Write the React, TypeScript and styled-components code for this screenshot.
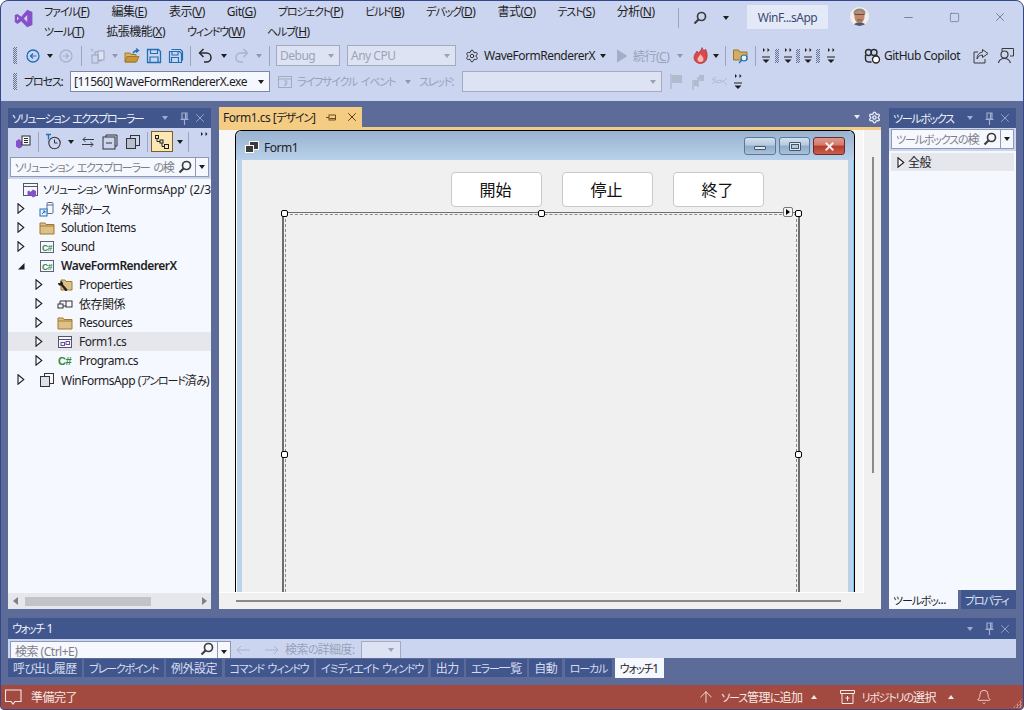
import { ReactNode } from "react";
import styled, { createGlobalStyle } from "styled-components";
import { ArrowUp, Bell, Minus, Settings, Square, X } from "lucide-react";

const GlobalStyle = createGlobalStyle`
  html, body {
    margin: 0;
    width: 1024px;
    height: 710px;
    overflow: hidden;
    background: #fff;
  }
  * {
    box-sizing: border-box;
  }
  body {
    font-family: "Noto Sans", "Noto Sans CJK JP", sans-serif;
    font-size: 12px;
    letter-spacing: -0.5px;
    font-feature-settings: "palt";
    color: #1e1e1e;
  }
`;

// katakana in the original UI font runs much narrower than the CJK fallback
const Ka = styled.span`
  font-size: 11px;
  letter-spacing: -1.15px;
  word-spacing: 2px;
`;

const T = ({ children }: { children: string }) => (
  <>
    {children
      .split(/([\u3041-\u30ff]+(?: [\u3041-\u30ff]+)*)/)
      .map((part, i) => (i % 2 ? <Ka key={i}>{part}</Ka> : part))}
  </>
);

const Window = styled.div`
  width: 1024px;
  height: 710px;
  display: flex;
  flex-direction: column;
  border: 1px solid #33478a;
  border-radius: 8px 8px 4px 4px;
  overflow: hidden;
  background: #5d6b99;
`;

const TitleArea = styled.div`
  height: 100px;
  flex: none;
  background: #ccd5f0;
`;

const TitleBar = styled.div`
  height: 43px;
  display: flex;
  align-items: flex-start;
`;

const LogoBox = styled.div`
  width: 43px;
  flex: none;
  padding: 8px 0 0 13px;
`;

const MenuColumn = styled.div`
  width: 634px;
  flex: none;
  display: flex;
  flex-direction: column;
  padding-top: 1px;
`;

const MenuRow = styled.div`
  height: 20px;
  display: flex;
  align-items: center;
  gap: 22px;
  white-space: nowrap;
  line-height: 20px;
`;

const MenuItem = styled.span`
  color: #1e1e1e;
`;

const TitleSep = styled.div`
  width: 1px;
  height: 20px;
  margin-top: 7px;
  background: #9aa5c0;
  flex: none;
`;

const TitleBox = styled.div`
  width: 81px;
  height: 24px;
  margin: 4px 0 0 16px;
  background: #e4e9f8;
  color: #3c4a70;
  display: flex;
  align-items: center;
  justify-content: center;
  flex: none;
`;

const Avatar = styled.div`
  width: 19px;
  height: 19px;
  margin: 6px 0 0 22px;
  border-radius: 50%;
  overflow: hidden;
  flex: none;
`;

const WinControl = styled.div`
  width: 46px;
  height: 32px;
  flex: none;
  display: flex;
  align-items: center;
  justify-content: center;
  color: #4d5c82;
`;

const WinControls = styled.div`
  display: flex;
  margin-left: 16px;
`;

const Toolbar = styled.div`
  height: 23px;
  margin-bottom: 3px;
  display: flex;
  align-items: center;
  padding: 0 9px 0 12px;
  white-space: nowrap;
`;

const Grip = styled.div`
  width: 4px;
  height: 17px;
  flex: none;
  background: repeating-conic-gradient(#66718f 0 25%, transparent 0 50%) 0 0 / 2px 2px;
`;

const SmallGrip = styled(Grip)`
  height: 14px;
`;

const Slot = styled.div<{ $w: number; $h?: number }>`
  width: ${(p) => p.$w}px;
  height: ${(p) => (p.$h ? `${p.$h}px` : "100%")};
  flex: none;
  display: flex;
  align-items: center;
  justify-content: center;
`;

const TopSlot = styled(Slot)`
  align-items: flex-start;
  padding-top: 3px;
`;

const Gap = styled.div<{ $w: number }>`
  width: ${(p) => p.$w}px;
  flex: none;
`;

const ToolSep = styled.div`
  width: 1px;
  height: 20px;
  background: #9aa5c0;
`;

const Caret = styled.span<{ $color?: string; $up?: boolean; $ml?: number }>`
  display: block;
  width: 0;
  height: 0;
  flex: none;
  margin-left: ${(p) => p.$ml ?? 0}px;
  border-left: 3.5px solid transparent;
  border-right: 3.5px solid transparent;
  ${(p) => (p.$up ? "border-bottom" : "border-top")}: 4px solid ${(p) => p.$color ?? "#1e1e1e"};
`;

const Combo = styled.div<{ $w: number; $off?: boolean }>`
  width: ${(p) => p.$w}px;
  height: 21px;
  flex: none;
  display: flex;
  align-items: center;
  justify-content: space-between;
  padding: 0 5px 0 3px;
  border: 1px solid ${(p) => (p.$off ? "#a3abbd" : "#7d88a6")};
  background: ${(p) => (p.$off ? "#dde3f3" : "#f6f8ff")};
  color: ${(p) => (p.$off ? "#9aa3b8" : "#1e1e1e")};
  overflow: hidden;
`;

const ToolText = styled.span<{ $w?: number; $off?: boolean }>`
  color: ${(p) => (p.$off ? "#98a1b8" : "#1e1e1e")};
  flex: none;
  ${(p) => (p.$w ? `width: ${p.$w}px;` : "")}
`;

const RightTools = styled.div`
  margin-left: auto;
  display: flex;
  align-items: center;
  height: 100%;
`;

const Main = styled.div`
  flex: 1;
  min-height: 0;
  padding: 7px 7px 0;
  display: flex;
  flex-direction: column;
  gap: 9px;
`;

const TopRow = styled.div`
  height: 501px;
  flex: none;
  display: flex;
  gap: 8px;
`;

const Panel = styled.div<{ $w: number }>`
  width: ${(p) => p.$w}px;
  flex: none;
  display: flex;
  flex-direction: column;
  background: #f6f8ff;
  overflow: hidden;
`;

const PanelHeader = styled.div<{ $h?: number }>`
  height: ${(p) => p.$h ?? 20}px;
  flex: none;
  background: #40568d;
  color: #f2f4fb;
  display: flex;
  align-items: center;
  padding: 0 4px 0 4px;
  white-space: nowrap;
`;

const HeaderTitle = styled.span`
  flex: 1;
  & > span {
    letter-spacing: -1.35px;
  }
`;

const HeaderButtons = styled.div`
  display: flex;
  align-items: center;
  gap: 3px;
  color: #9fadcf;
`;

const PanelTools = styled.div`
  height: 27px;
  flex: none;
  background: #ccd5f0;
  display: flex;
  align-items: center;
  padding-left: 3px;
`;

const ToggleBox = styled.div`
  width: 22px;
  height: 21px;
  flex: none;
  margin-left: 2px;
  background: #fbe7b5;
  border: 1px solid #7d6020;
  display: flex;
  align-items: center;
  justify-content: center;
`;

const SearchRow = styled.div<{ $pt: number; $h: number }>`
  height: ${(p) => p.$h}px;
  flex: none;
  background: #ccd5f0;
  padding: ${(p) => p.$pt}px 2px 0;
`;

const SearchBox = styled.div<{ $h: number }>`
  height: ${(p) => p.$h}px;
  display: flex;
  align-items: center;
  border: 1px solid #8f99b3;
  background: #f6f8ff;
`;

const SearchText = styled.span`
  flex: 1;
  min-width: 0;
  overflow: hidden;
  white-space: nowrap;
  padding-left: 4px;
  color: #7e7e86;
`;

const SearchIcon = styled.div`
  width: 20px;
  flex: none;
  display: flex;
  justify-content: center;
  color: #4b4b4b;
`;

const SearchDrop = styled.div`
  width: 13px;
  height: 100%;
  flex: none;
  border-left: 1px solid #8f99b3;
  display: flex;
  align-items: center;
  justify-content: center;
`;

const TreeList = styled.div`
  flex: 1;
  min-height: 0;
  padding-top: 1px;
  overflow: hidden;
`;

const TreeRow = styled.div<{ $depth: number; $selected?: boolean }>`
  height: 19px;
  display: flex;
  align-items: center;
  white-space: nowrap;
  padding-left: ${(p) => 8 + p.$depth * 18}px;
  background: ${(p) => (p.$selected ? "#e6e7ed" : "transparent")};
`;

const TreeArrow = styled.div`
  width: 10px;
  flex: none;
  display: flex;
  justify-content: center;
`;

const TreeIcon = styled.div`
  width: 16px;
  height: 16px;
  flex: none;
  margin: 0 6px 0 13px;
`;

const RootIcon = styled(TreeIcon)`
  margin: 0 4px 0 7px;
`;

const TreeLabel = styled.span<{ $bold?: boolean }>`
  font-weight: ${(p) => (p.$bold ? 600 : 400)};
`;

const RootLabel = styled(TreeLabel)`
  letter-spacing: -0.15px;
`;

const HScroll = styled.div`
  height: 16px;
  flex: none;
  background: #e6e7ed;
  display: flex;
  align-items: center;
  padding: 0 4px 0 5px;
  justify-content: space-between;
`;

const HThumb = styled.div`
  width: 126px;
  height: 9px;
  background: #c2c3c9;
  margin: 0 auto 0 7px;
`;

const ScrollArrow = styled.span<{ $right?: boolean }>`
  display: block;
  width: 0;
  height: 0;
  border-top: 4px solid transparent;
  border-bottom: 4px solid transparent;
  ${(p) => (p.$right ? "border-left" : "border-right")}: 5px solid #7c8087;
`;

const DocColumn = styled.div`
  width: 662px;
  flex: none;
  display: flex;
  flex-direction: column;
  margin-top: -1px;
`;

const DocStrip = styled.div`
  height: 20px;
  flex: none;
  display: flex;
  align-items: center;
`;

const DocTab = styled.div`
  width: 143px;
  height: 100%;
  flex: none;
  background: #f5cc84;
  display: flex;
  align-items: center;
  padding: 0 3px 0 4px;
  white-space: nowrap;
  color: #1e1e1e;
`;

const DocTabTitle = styled.span`
  flex: 1;
`;

const DocTools = styled.div`
  margin-left: auto;
  display: flex;
  align-items: center;
  gap: 8px;
  color: #e6ebf7;
`;

const AccentLine = styled.div`
  height: 3px;
  flex: none;
  background: #f5cc84;
`;

const Designer = styled.div`
  flex: 1;
  min-height: 0;
  display: grid;
  grid-template-columns: 1fr 17px;
  grid-template-rows: 1fr 16px;
  background: #f0f0f0;
`;

const Canvas = styled.div`
  position: relative;
  overflow: hidden;
  background: #f7f7f7;
  border-right: 1px solid #fff;
  border-bottom: 1px solid #fff;
`;

const VBar = styled.div`
  padding: 27px 0 0 8px;
`;

const VThumb = styled.div`
  width: 2px;
  height: 316px;
  background: #8a8a8a;
`;

const HBar = styled.div`
  padding: 7px 0 0 17px;
`;

const HLine = styled.div`
  width: 605px;
  height: 2px;
  background: #8a8a8a;
`;

const FormWindow = styled.div`
  position: absolute;
  left: 16px;
  top: 0;
  width: 620px;
  height: 600px;
  border: 1px solid #000;
  border-bottom: none;
  border-radius: 6px 6px 0 0;
  box-shadow: inset 1px 1px 0 #fff, inset -1px 0 0 #7cc4ee;
  background: #bad3ea;
  display: flex;
  flex-direction: column;
  padding: 0 6px 0 6px;
`;

const FormTitleBar = styled.div`
  height: 29px;
  flex: none;
  margin: 0 -6px;
  padding: 3px 9px 0;
  background: linear-gradient(#98b2d0, #b9d1ea);
  border-radius: 6px 6px 0 0;
  display: flex;
  align-items: center;
  gap: 5px;
  color: #222;
`;

const FormButtons = styled.div`
  margin-left: auto;
  display: flex;
  align-items: flex-start;
  gap: 3px;
  height: 100%;
  padding-top: 3px;
`;

const FormBtn = styled.div<{ $w: number; $close?: boolean }>`
  width: ${(p) => p.$w}px;
  height: 18px;
  border-radius: 3px;
  border: 1px solid ${(p) => (p.$close ? "#6b2b2b" : "#5c7896")};
  background: ${(p) =>
    p.$close
      ? "linear-gradient(#dc9a8e 0, #d27a6a 45%, #b53a2a 50%, #c9604c 100%)"
      : "linear-gradient(#d3e1ef 0, #b4c9de 45%, #8fabc8 50%, #a9c2da 100%)"};
  display: flex;
  align-items: center;
  justify-content: center;
`;

const MinGlyph = styled.div`
  width: 12px;
  height: 4px;
  margin-top: 4px;
  background: #dfe7ef;
  border: 1px solid #43566c;
  border-radius: 1px;
`;

const MaxGlyph = styled.div`
  width: 12px;
  height: 9px;
  background: #dfe7ef;
  border: 1px solid #43566c;
  border-radius: 1px;
  display: flex;
  align-items: center;
  justify-content: center;
  &::after {
    content: "";
    width: 6px;
    height: 3px;
    background: #b4c9de;
    border: 1px solid #43566c;
  }
`;

const Client = styled.div`
  flex: 1;
  min-height: 0;
  background: #f0f0f0;
  padding-top: 12px;
`;

const ButtonRow = styled.div`
  display: flex;
  gap: 20px;
  margin-left: 209px;
`;

const FormButton = styled.div`
  width: 91px;
  height: 35px;
  padding: 0 2px 2px 0;
  background: #fff;
  border: 1px solid #c8c8c8;
  border-radius: 4px;
  display: flex;
  align-items: center;
  justify-content: center;
  font-size: 16px;
  letter-spacing: 0;
  color: #111;
`;

const Selection = styled.div`
  position: relative;
  width: 518px;
  height: 460px;
  margin: 5px 0 0 40px;
  border: 1px solid #6e6e6e;
  border-left-width: 2px;
  border-right-width: 2px;
  border-bottom: none;
  padding: 1px 1px 0;
`;

const InnerDash = styled.div`
  height: 100%;
  border: 1px dashed #8c8c8c;
  border-bottom: none;
`;

const Handle = styled.div<{ $x: string; $y: number }>`
  position: absolute;
  left: ${(p) => p.$x};
  top: ${(p) => p.$y}px;
  width: 7px;
  height: 7px;
  margin-left: -3.5px;
  background: #fff;
  border: 1.5px solid #000;
  border-radius: 2px;
`;

const SmartTag = styled.div`
  position: absolute;
  right: 5px;
  top: -6px;
  width: 10px;
  height: 10px;
  background: #f4f4f4;
  border: 1px solid #777;
  border-radius: 2px;
  display: flex;
  align-items: center;
  justify-content: center;
  &::after {
    content: "";
    border-left: 4px solid #000;
    border-top: 3px solid transparent;
    border-bottom: 3px solid transparent;
  }
`;

const Category = styled.div`
  height: 18px;
  margin: 2px 2px 0;
  background: #e6e7ed;
  display: flex;
  align-items: center;
  gap: 3px;
  padding-left: 6px;
`;

const ToolBoxFill = styled.div`
  flex: 1;
`;

const BottomTabs = styled.div`
  height: 19px;
  flex: none;
  display: flex;
  background: #5d6b99;
`;

const BottomTab = styled.div<{ $w: number; $active?: boolean }>`
  width: ${(p) => p.$w}px;
  flex: none;
  display: flex;
  align-items: center;
  padding-left: 4px;
  white-space: nowrap;
  overflow: hidden;
  background: ${(p) => (p.$active ? "#f6f8ff" : "#40568d")};
  color: ${(p) => (p.$active ? "#1e1e1e" : "#dfe5f5")};
  margin-left: ${(p) => (p.$active ? 0 : 3)}px;
`;

const WatchPanel = styled.div`
  flex: 1;
  min-height: 0;
  display: flex;
  flex-direction: column;
`;

const WatchTools = styled.div`
  height: 19px;
  flex: none;
  background: #ccd5f0;
  display: flex;
  align-items: flex-start;
  padding: 2px 0 0 2px;
  overflow: hidden;
`;

const WatchSearch = styled.div`
  width: 221px;
  height: 22px;
  flex: none;
  display: flex;
  border: 1px solid #8f99b3;
  background: #f6f8ff;
`;

const WatchArrows = styled.div`
  display: flex;
  align-items: center;
  gap: 15px;
  height: 17px;
  margin: 0 6px 0 5px;
`;

const WatchLabel = styled.span`
  color: #98a1b8;
  line-height: 17px;
  white-space: nowrap;
`;

const WatchCombo = styled.div`
  width: 40px;
  height: 22px;
  flex: none;
  margin-left: 6px;
  border: 1px solid #a3abbd;
  background: #dde3f3;
  display: flex;
  justify-content: flex-end;
  padding: 6px 6px 0 0;
`;

const WatchTabs = styled.div`
  height: 20px;
  flex: none;
  display: flex;
  align-items: flex-start;
  gap: 2.5px;
`;

const WatchTab = styled.div<{ $active?: boolean }>`
  height: ${(p) => (p.$active ? 20 : 18)}px;
  margin-top: ${(p) => (p.$active ? 0 : 1)}px;
  padding: 0 5px;
  display: flex;
  align-items: center;
  white-space: nowrap;
  background: ${(p) => (p.$active ? "#f6f8ff" : "#40568d")};
  color: ${(p) => (p.$active ? "#1e1e1e" : "#d6ddf0")};
`;

const StatusBar = styled.div`
  height: 24px;
  flex: none;
  background: #a34a40;
  color: #f5e9e7;
  display: flex;
  align-items: center;
  padding: 0 2px 0 4px;
  white-space: nowrap;
  position: relative;
`;

const StatusLeft = styled.div`
  display: flex;
  align-items: center;
  gap: 9px;
`;

const StatusRight = styled.div`
  margin-left: auto;
  display: flex;
  align-items: center;
`;

const StatusItem = styled.div`
  display: flex;
  align-items: center;
  gap: 6px;
`;

const SizeGrip = styled.div`
  position: absolute;
  right: 1px;
  bottom: 1px;
  width: 9px;
  height: 9px;
  background: repeating-conic-gradient(#c98a82 0 25%, transparent 0 50%) 0 0 / 3px 3px;
  clip-path: polygon(100% 0, 100% 100%, 0 100%);
`;

/* ---- drawings ---- */

const Svg = ({ w = 16, h = 16, children }: { w?: number; h?: number; children: ReactNode }) => (
  <svg width={w} height={h} viewBox={`0 0 ${w} ${h}`} fill="none" style={{ display: "block", flex: "none" }}>
    {children}
  </svg>
);

const VsLogo = () => (
  <Svg w={19} h={19}>
    <path
      d="M13.2 0.8 18.4 3v13l-5.2 2.2-6-6-3.7 2.9L0.8 13V6l2.7-1.1 3.7 2.9zM3 7.6v3.8l2-1.9zM13.2 6 9.8 9.5l3.4 3.5z"
      fill="#8650c8"
    />
  </Svg>
);

const Face = () => (
  <svg width={19} height={19} viewBox="0 0 19 19" style={{ display: "block" }}>
    <rect width="19" height="19" fill="#f3efe8" />
    <ellipse cx="9.5" cy="6" rx="6" ry="4.5" fill="#8d8a85" />
    <ellipse cx="9.5" cy="10" rx="5" ry="6.5" fill="#c08a70" />
    <path d="M5 7.5h9" stroke="#6b4a3c" strokeWidth="1" />
    <path d="M7 13h5" stroke="#7a4a3c" strokeWidth="1" />
    <path d="M3 19c1-3 4-3.500 6.500-3.500S15 16 16 19z" fill="#4c5a6e" />
  </svg>
);

const Lens = ({ color = "#3d3d3d", size = 14 }: { color?: string; size?: number }) => (
  <svg width={size} height={size} viewBox="0 0 14 14" fill="none" style={{ display: "block" }}>
    <circle cx="8.500" cy="5.500" r="4" stroke={color} strokeWidth="1.700" />
    <path d="M5.500 8.500 1.500 12.500" stroke={color} strokeWidth="2.200" />
  </svg>
);

const CircleArrow = ({ dir, color }: { dir: "l" | "r"; color: string }) => (
  <Svg w={14} h={14}>
    <circle cx="7" cy="7" r="6" stroke={color} strokeWidth="1.300" />
    <path
      d={dir === "l" ? "M10.500 7h-6M7 4.500 4.500 7 7 9.500" : "M3.500 7h6M7 4.500 9.500 7 7 9.500"}
      stroke={color}
      strokeWidth="1.200"
    />
  </Svg>
);

const NewProject = () => (
  <Svg>
    <path d="M1 2h2M2 1v2M.5.5l3 3M3.500.5l-3 3" stroke="#aeb6ca" strokeWidth=".8" />
    <rect x="5" y="4" width="6" height="9" stroke="#9aa3b8" fill="#ccd5f0" />
    <rect x="8" y="3" width="6" height="9" stroke="#9aa3b8" fill="#dde3f3" />
    <rect x="2" y="7" width="6" height="8" stroke="#9aa3b8" fill="#ccd5f0" />
  </Svg>
);

const OpenFolder = () => (
  <Svg>
    <path d="M1 5h5l1 1.500h5V14H1z" fill="#d9b26a" stroke="#a07a2a" />
    <path d="M3 8.500h12L12.500 14H1z" fill="#c8963c" stroke="#a07a2a" />
    <path d="M9 5.500c.5-2 2-3 5-3M12 .5l2.500 2-2.500 2" stroke="#1f6fb5" strokeWidth="1.300" />
  </Svg>
);

const Save = () => (
  <Svg>
    <path d="M1.500 1.500h11l2 2v11h-13z" stroke="#1f6fb5" strokeWidth="1.300" />
    <path d="M4.500 1.500v4h7v-4M4 14.500V9h8v5.500" stroke="#1f6fb5" strokeWidth="1.200" />
  </Svg>
);

const SaveAll = () => (
  <Svg>
    <path d="M3.500 1.500h9l2 2v9" stroke="#1f6fb5" strokeWidth="1.200" />
    <path d="M1.500 3.500h10l2 2v9h-12z" stroke="#1f6fb5" strokeWidth="1.200" />
    <path d="M4 3.500v3.500h6V3.500M3.500 14.500V9.500h7v5" stroke="#1f6fb5" strokeWidth="1.100" />
  </Svg>
);

const Undo = ({ color, flip }: { color: string; flip?: boolean }) => (
  <svg width={15} height={16} viewBox="0 0 15 16" fill="none" style={{ display: "block", transform: flip ? "scaleX(-1)" : undefined }}>
    <path d="M5.500 1 1.500 5l4 4" stroke={color} strokeWidth="1.500" />
    <path d="M2 5h6.500a4.500 4.500 0 0 1 0 9H6" stroke={color} strokeWidth="1.500" />
  </svg>
);

const Play = () => (
  <Svg w={12} h={14}>
    <path d="M1 0.500 11.500 7 1 13.500z" fill="#a3adc6" />
  </Svg>
);

const Flame = () => (
  <Svg w={15} h={17}>
    <path
      d="M9 .5c.5 2.500 2 3 2.500 2.500.5 1 1 .5 1-1 1.500 3 2 6 1.500 8.500C13.500 14 11 16.500 7.500 16.500S1 14 1 10.500C1 7.500 3 6 4 4c.5 1 1 1.500 1.500 2C6.500 4.500 8.500 3 9 .5z"
      fill="#d9484b"
      stroke="#9c2c30"
      strokeWidth=".6"
    />
    <path d="M7.500 7c.5 1.500 3 2.500 3 5a3 3 0 0 1-6 0c0-2 2.500-3 3-5z" fill="#f6b9b4" />
  </Svg>
);

const FolderSearch = () => (
  <Svg w={16} h={16}>
    <path d="M.5 2h5l1.500 2h7v8H.5z" fill="#d3ac66" stroke="#9a7626" />
    <circle cx="11" cy="10" r="3" fill="#e9f0fb" stroke="#1f6fb5" strokeWidth="1.200" />
    <path d="M9 12l-3 3" stroke="#1f6fb5" strokeWidth="1.500" />
  </Svg>
);

const Overflow = ({ tips }: { tips?: boolean }) => (
  <Svg w={8} h={17}>
    <path d="M1 1v4l2-2zM5.500 1v4l2-2z" fill="#1e1e1e" />
    {!tips && (
      <>
        <path d="M0 10h8" stroke="#1e1e1e" />
        <path d="M.5 12.500h7L4 16z" fill="#1e1e1e" />
      </>
    )}
  </Svg>
);

const LifeCycle = () => (
  <Svg w={15} h={15}>
    <rect x=".5" y="2.500" width="13" height="11" stroke="#a3abbd" />
    <path d="M.5 5h13" stroke="#a3abbd" />
    <path d="M6 7h3L6.500 12l3-3" stroke="#a3abbd" />
  </Svg>
);

const Flag = () => (
  <Svg w={13} h={15}>
    <path d="M1 0v15" stroke="#a3abbd" />
    <rect x="2" y="1" width="10" height="8" fill="#b2bace" />
  </Svg>
);

const Flags = () => (
  <Svg w={14} h={16}>
    <path d="M2 6v10M7 3v10" stroke="#a3abbd" />
    <rect x="3" y="6" width="4" height="6" fill="#b2bace" />
    <rect x="8" y="1" width="5" height="6" fill="#b2bace" />
  </Svg>
);

const Threads = () => (
  <Svg w={15} h={11}>
    <path d="M0 3c4 5 9 5 15-1M0 8c5-5 10-5 15 1" stroke="#b2bace" />
    <path d="M1 1l3 3M1 4l3-3" stroke="#b2bace" />
  </Svg>
);

const Copilot = () => (
  <Svg w={17} h={16}>
    <circle cx="4.500" cy="4.500" r="3" stroke="#2a2a2a" strokeWidth="1.400" />
    <circle cx="10" cy="4.500" r="3" stroke="#2a2a2a" strokeWidth="1.400" />
    <path d="M1.500 7v4c0 2 1.500 3 4 3h2M13 7v1" stroke="#2a2a2a" strokeWidth="1.400" />
    <circle cx="12" cy="11.500" r="3.500" fill="#fff" stroke="#2a2a2a" strokeWidth="1.400" />
  </Svg>
);

const ShareIcon = () => (
  <Svg w={16} h={16}>
    <path d="M5 4H1v11h11v-4" stroke="#3a3a3a" />
    <path d="M9.500 1.500 15 5.500l-5.500 4V7C7 7 5 8.500 4 11c0-4 2-6.500 5.500-7z" stroke="#3a3a3a" />
  </Svg>
);

const FeedbackIcon = () => (
  <Svg w={16} h={16}>
    <path d="M4 3V.5h11.500V8H12" stroke="#3a3a3a" />
    <circle cx="6.500" cy="6.500" r="3.500" stroke="#3a3a3a" strokeWidth="1.200" />
    <path d="M.5 15c.5-3 3-4.500 6-4.500s5 1.500 6 4.500" stroke="#3a3a3a" strokeWidth="1.200" />
  </Svg>
);

const PinIcon = ({ color = "currentColor" }: { color?: string }) => (
  <Svg w={11} h={13}>
    <path d="M3 1h5v6H3zM1.500 7.500h8M5.500 8v5M6.500 1v6" stroke={color} strokeWidth="1.200" />
  </Svg>
);

const PinRotated = () => (
  <Svg w={11} h={9}>
    <path d="M0 4.500h3M3 1.500v6M3.500 2h6v5h-6M3.500 5.500h6" stroke="#6b4a1c" />
  </Svg>
);

const PanelButtons = () => (
  <HeaderButtons>
    <Caret $color="#9fadcf" />
    <Gap $w={5} />
    <PinIcon />
    <X size={14} strokeWidth={1.500} />
  </HeaderButtons>
);

const TriOpen = () => (
  <Svg w={8} h={11}>
    <path d="M1 .8 6.800 5.500 1 10.200z" stroke="#1e1e1e" strokeWidth="1.100" fill="#f6f8ff" />
  </Svg>
);

const TriDown = () => (
  <Svg w={8} h={8}>
    <path d="M7.500 1v6.500H1z" fill="#1e1e1e" />
  </Svg>
);

const Home = () => (
  <Svg>
    <path d="M1 7l3-2 3 2.500V13l-3 1.500L1 12.500zM3 8.500 4.500 10 3 11.500z" fill="#8650c8" />
    <rect x="7" y="2" width="8" height="9" fill="#f6f8ff" stroke="#2a2a2a" />
    <path d="M9 4.500h4M9 6.500h4M9 8.500h4" stroke="#2a2a2a" />
  </Svg>
);

const History = () => (
  <Svg w={17} h={17}>
    <circle cx="9.500" cy="10" r="5.700" stroke="#333" strokeWidth="1.100" />
    <path d="M9.500 6.500V10h3" stroke="#333" />
    <path d="M1 1.500h5M3.500 1.500v5" stroke="#1f6fb5" strokeWidth="1.400" />
  </Svg>
);

const Sync = () => (
  <Svg w={14} h={14}>
    <path d="M13 4.500H2M4.500 2 2 4.500 4.500 7M1 9.500h11M9.500 7 12 9.500 9.500 12" stroke="#3a3a3a" />
  </Svg>
);

const Collapse = () => (
  <Svg>
    <path d="M4 3V1h11v11h-2" stroke="#333" />
    <rect x="1" y="3" width="12" height="12" stroke="#333" />
    <path d="M4 9h6" stroke="#333" />
  </Svg>
);

const CopyIcon = () => (
  <Svg>
    <rect x="5.500" y="1.500" width="9" height="10" stroke="#333" fill="#ccd5f0" />
    <rect x="1.500" y="4.500" width="9" height="10" stroke="#333" fill="#b9bfcf" />
  </Svg>
);

const NodesIcon = () => (
  <Svg w={16} h={16}>
    <rect x="1.500" y="1.500" width="3" height="3" stroke="#222" />
    <rect x="6" y="6" width="3" height="3" stroke="#222" />
    <rect x="10.500" y="10.500" width="4" height="4" stroke="#222" />
    <path d="M3 5v2.500h3M8 9v3.500h2.500" stroke="#222" />
  </Svg>
);

const Folder = () => (
  <Svg>
    <path d="M1 3h5l1 1.500h8V14H1z" fill="#dcc28a" stroke="#a07a2a" />
    <path d="M1 6h14" stroke="#a07a2a" />
  </Svg>
);

const CsProj = () => (
  <Svg>
    <rect x="1.500" y="2.500" width="13" height="11" fill="#f6f8ff" stroke="#5f6470" />
    <text x="3" y="11.500" fontSize="8.500" fontWeight="700" fill="#2d8a3e" fontFamily="Liberation Sans, sans-serif">
      C#
    </text>
  </Svg>
);

const Cs = () => (
  <Svg>
    <text x="1" y="12" fontSize="11" fontWeight="700" fill="#2d8a3e" fontFamily="Liberation Sans, sans-serif">
      C#
    </text>
  </Svg>
);

const External = () => (
  <Svg>
    <rect x="8" y="1.500" width="6" height="11" rx="1" stroke="#5f6f98" />
    <path d="M8 4h6" stroke="#5f6f98" />
    <rect x="1" y="8" width="7" height="7" fill="#e7f0fb" stroke="#1f6fb5" />
    <path d="M3 13l3-3M4 10h2v2" stroke="#1f6fb5" />
  </Svg>
);

const Wrench = () => (
  <Svg>
    <path d="M4 3h4l1 1.500h6V13H4z" fill="#dcc28a" stroke="#a07a2a" />
    <path d="M1 6c0 2 1.500 3 3 2.500l4 5c1 1.500 3 0 2-1.500L6 7.500C6.500 5.500 5 4 3.500 4v2z" fill="#222" />
  </Svg>
);

const Depend = () => (
  <Svg>
    <rect x="1" y="8" width="5" height="4" stroke="#333" />
    <rect x="9" y="5" width="6" height="6" stroke="#333" />
    <path d="M3 8V5h6M6 10h3" stroke="#333" />
  </Svg>
);

const FormFile = () => (
  <Svg>
    <rect x="1.500" y="2.500" width="13" height="11" stroke="#55556a" fill="#f6f8ff" />
    <path d="M1.500 5.500h13" stroke="#55556a" />
    <rect x="4" y="8.500" width="3.500" height="3" stroke="#6a4fa0" />
    <rect x="9" y="7.500" width="3.500" height="3" stroke="#6a4fa0" />
  </Svg>
);

const Unloaded = () => (
  <Svg>
    <rect x="5.500" y="1.500" width="9" height="10" stroke="#333" />
    <rect x="1.500" y="4.500" width="9" height="10" stroke="#333" fill="#dfe1ea" />
  </Svg>
);

const Solution = () => (
  <Svg>
    <rect x=".5" y="1.500" width="14" height="12" stroke="#55556a" />
    <path d="M.5 4.500h14" stroke="#55556a" />
    <path d="M6 8.500l1.500 1.500L10 7.500l3 1.500v5l-3 1.500-2.500-2.500L6 14l-1.500-1v-3.500z" fill="#8650c8" />
  </Svg>
);

const FormIcon = () => (
  <Svg w={14} h={12}>
    <rect x="4.500" y=".5" width="9" height="8" fill="#3c3c3c" stroke="#fff" />
    <rect x=".5" y="4.500" width="8" height="7" fill="#3c3c3c" stroke="#fff" />
  </Svg>
);

const Bubble = () => (
  <Svg w={17} h={17}>
    <path d="M.5 1h15.500v11.500H10l-2 2.500-2-2.500H.5z" stroke="#f5e9e7" strokeWidth="1.100" />
  </Svg>
);

const RepoIcon = () => (
  <Svg w={15} h={14}>
    <path d="M.5.500h14v3H.5zM2 3.500v10h11v-10M7.500 6v5M5.500 8h4" stroke="#f5e9e7" />
  </Svg>
);

const WatchArrow = ({ right }: { right?: boolean }) => (
  <Svg w={14} h={10}>
    <path d={right ? "M0 5h13M9 1l4 4-4 4" : "M14 5H1M5 1 1 5l4 4"} stroke="#a9b2c8" />
  </Svg>
);

type Row = {
  label: string;
  depth: number;
  icon: ReactNode;
  open?: boolean;
  bold?: boolean;
  selected?: boolean;
};

const treeRows: Row[] = [
  { label: "外部ソース", depth: 0, icon: <External /> },
  { label: "Solution Items", depth: 0, icon: <Folder /> },
  { label: "Sound", depth: 0, icon: <CsProj /> },
  { label: "WaveFormRendererX", depth: 0, icon: <CsProj />, open: true, bold: true },
  { label: "Properties", depth: 1, icon: <Wrench /> },
  { label: "依存関係", depth: 1, icon: <Depend /> },
  { label: "Resources", depth: 1, icon: <Folder /> },
  { label: "Form1.cs", depth: 1, icon: <FormFile />, selected: true },
  { label: "Program.cs", depth: 1, icon: <Cs /> },
  { label: "WinFormsApp (アンロード済み)", depth: 0, icon: <Unloaded /> },
];

const menuTop = [
  ["ファイル", "F"],
  ["編集", "E"],
  ["表示", "V"],
  ["Git", "G"],
  ["プロジェクト", "P"],
  ["ビルド", "B"],
  ["デバッグ", "D"],
  ["書式", "O"],
  ["テスト", "S"],
  ["分析", "N"],
];

const menuBottom = [
  ["ツール", "T"],
  ["拡張機能", "X"],
  ["ウィンドウ", "W"],
  ["ヘルプ", "H"],
];

const watchTabs = [
  "呼び出し履歴",
  "ブレークポイント",
  "例外設定",
  "コマンド ウィンドウ",
  "イミディエイト ウィンドウ",
  "出力",
  "エラー一覧",
  "自動",
  "ローカル",
];

const handles = [
  { x: "0px", y: -3 },
  { x: "50%", y: -3 },
  { x: "100%", y: -3 },
  { x: "0px", y: 238 },
  { x: "100%", y: 238 },
];

function App() {
  return (
    <>
      <GlobalStyle />
      <Window>
        <TitleArea>
          <TitleBar>
            <LogoBox>
              <VsLogo />
            </LogoBox>
            <MenuColumn>
              <MenuRow>
                {menuTop.map(([name, key]) => (
                  <MenuItem key={key}>
                    <T>{name}</T>(<u>{key}</u>)
                  </MenuItem>
                ))}
              </MenuRow>
              <MenuRow>
                {menuBottom.map(([name, key]) => (
                  <MenuItem key={key}>
                    <T>{name}</T>(<u>{key}</u>)
                  </MenuItem>
                ))}
              </MenuRow>
            </MenuColumn>
            <TitleSep />
            <Slot $w={42} $h={34}>
              <Lens />
            </Slot>
            <Slot $w={10} $h={34}>
              <Caret />
            </Slot>
            <TitleBox>WinF...sApp</TitleBox>
            <Avatar>
              <Face />
            </Avatar>
            <WinControls>
              <WinControl>
                <Minus size={13} strokeWidth={1.300} />
              </WinControl>
              <WinControl>
                <Square size={11} strokeWidth={1.300} />
              </WinControl>
              <WinControl>
                <X size={14} strokeWidth={1.200} />
              </WinControl>
            </WinControls>
          </TitleBar>

          <Toolbar>
            <Grip />
            <Gap $w={9} />
            <Slot $w={14}>
              <CircleArrow dir="l" color="#1f6fb5" />
            </Slot>
            <Slot $w={19}>
              <Caret />
            </Slot>
            <Slot $w={14}>
              <CircleArrow dir="r" color="#a9b2c8" />
            </Slot>
            <Slot $w={16}>
              <ToolSep />
            </Slot>
            <Slot $w={18}>
              <NewProject />
            </Slot>
            <Slot $w={16}>
              <Caret $color="#8f98ae" />
            </Slot>
            <Slot $w={18}>
              <OpenFolder />
            </Slot>
            <Slot $w={26}>
              <Save />
            </Slot>
            <Slot $w={18}>
              <SaveAll />
            </Slot>
            <Slot $w={10}>
              <ToolSep />
            </Slot>
            <Slot $w={20}>
              <Undo color="#2a2a2a" />
            </Slot>
            <Slot $w={18}>
              <Caret />
            </Slot>
            <Slot $w={17}>
              <Undo color="#a9b2c8" flip />
            </Slot>
            <Slot $w={18}>
              <Caret $color="#8f98ae" />
            </Slot>
            <Slot $w={2}>
              <ToolSep />
            </Slot>
            <Gap $w={6} />
            <Combo $w={64} $off>
              Debug
              <Caret $color="#98a1b8" />
            </Combo>
            <Gap $w={7} />
            <Combo $w={109} $off>
              Any CPU
              <Caret $color="#98a1b8" />
            </Combo>
            <Gap $w={9} />
            <Slot $w={14}>
              <Settings size={14} strokeWidth={1.600} color="#2a2a2a" />
            </Slot>
            <Gap $w={5} />
            <ToolText $w={110}>WaveFormRendererX</ToolText>
            <Slot $w={18}>
              <Caret />
            </Slot>
            <Slot $w={20}>
              <Play />
            </Slot>
            <Gap $w={1} />
            <ToolText $w={38} $off>
              続行(<u>C</u>)
            </ToolText>
            <Slot $w={18}>
              <Caret $color="#8f98ae" />
            </Slot>
            <Slot $w={22}>
              <Flame />
            </Slot>
            <Slot $w={10}>
              <Caret />
            </Slot>
            <Slot $w={8}>
              <ToolSep />
            </Slot>
            <Slot $w={24}>
              <FolderSearch />
            </Slot>
            <Slot $w={4}>
              <ToolSep />
            </Slot>
            <Gap $w={4} />
            <Slot $w={10}>
              <Overflow />
            </Slot>
            <Slot $w={12}>
              <SmallGrip />
            </Slot>
            <Slot $w={10}>
              <Overflow />
            </Slot>
            <Slot $w={10}>
              <SmallGrip />
            </Slot>
            <Slot $w={10}>
              <Overflow />
            </Slot>
            <Slot $w={10}>
              <SmallGrip />
            </Slot>
            <Slot $w={16}>
              <Overflow />
            </Slot>
            <RightTools>
              <Copilot />
              <Gap $w={3} />
              <ToolText $w={79}>GitHub Copilot</ToolText>
              <Gap $w={10} />
              <ShareIcon />
              <Gap $w={9} />
              <FeedbackIcon />
            </RightTools>
          </Toolbar>

          <Toolbar>
            <Grip />
            <Gap $w={7} />
            <ToolText $w={46}>
              <T>プロセス</T>:
            </ToolText>
            <Combo $w={200}>
              [11560] WaveFormRendererX.exe
              <Caret />
            </Combo>
            <Gap $w={8} />
            <Slot $w={15}>
              <LifeCycle />
            </Slot>
            <Gap $w={4} />
            <ToolText $w={106} $off>
              <T>ライフサイクル イベント</T>
            </ToolText>
            <Slot $w={10}>
              <Caret $color="#8f98ae" />
            </Slot>
            <Gap $w={6} />
            <ToolText $w={43} $off>
              <T>スレッド</T>:
            </ToolText>
            <Combo $w={200} $off>
              <span />
              <Caret $color="#98a1b8" />
            </Combo>
            <Gap $w={8} />
            <Slot $w={13}>
              <Flag />
            </Slot>
            <Gap $w={8} />
            <Slot $w={14}>
              <Flags />
            </Slot>
            <Gap $w={7} />
            <Slot $w={15}>
              <Threads />
            </Slot>
            <Gap $w={7} />
            <Slot $w={8}>
              <Overflow />
            </Slot>
          </Toolbar>
        </TitleArea>

        <Main>
          <TopRow>
            <Panel $w={203}>
              <PanelHeader>
                <HeaderTitle>
                  <T>ソリューション エクスプローラー</T>
                </HeaderTitle>
                <PanelButtons />
              </PanelHeader>
              <PanelTools>
                <Slot $w={24}>
                  <Home />
                </Slot>
                <Slot $w={6}>
                  <ToolSep />
                </Slot>
                <Slot $w={24}>
                  <History />
                </Slot>
                <Slot $w={12}>
                  <Caret />
                </Slot>
                <Slot $w={22}>
                  <Sync />
                </Slot>
                <Slot $w={22}>
                  <Collapse />
                </Slot>
                <Slot $w={24}>
                  <CopyIcon />
                </Slot>
                <Slot $w={4}>
                  <ToolSep />
                </Slot>
                <ToggleBox>
                  <NodesIcon />
                </ToggleBox>
                <Slot $w={13}>
                  <Caret />
                </Slot>
                <Slot $w={5}>
                  <ToolSep />
                </Slot>
                <TopSlot $w={26}>
                  <Overflow tips />
                </TopSlot>
              </PanelTools>
              <SearchRow $pt={2} $h={24}>
                <SearchBox $h={20}>
                  <SearchText>
                    <T>ソリューション エクスプローラー の検索</T>
                  </SearchText>
                  <SearchIcon>
                    <Lens />
                  </SearchIcon>
                  <SearchDrop>
                    <Caret />
                  </SearchDrop>
                </SearchBox>
              </SearchRow>
              <TreeList>
                <TreeRow $depth={0}>
                  <RootIcon>
                    <Solution />
                  </RootIcon>
                  <RootLabel>
                    <T>ソリューション 'WinFormsApp' (2/3 プロジェクト)</T>
                  </RootLabel>
                </TreeRow>
                {treeRows.map((row) => (
                  <TreeRow key={row.label} $depth={row.depth} $selected={row.selected}>
                    <TreeArrow>{row.open ? <TriDown /> : <TriOpen />}</TreeArrow>
                    <TreeIcon>{row.icon}</TreeIcon>
                    <TreeLabel $bold={row.bold}>
                      <T>{row.label}</T>
                    </TreeLabel>
                  </TreeRow>
                ))}
              </TreeList>
              <HScroll>
                <ScrollArrow />
                <HThumb />
                <ScrollArrow $right />
              </HScroll>
            </Panel>

            <DocColumn>
              <DocStrip>
                <DocTab>
                  <DocTabTitle>
                    Form1.cs [<T>デザイン</T>]
                  </DocTabTitle>
                  <Slot $w={11}>
                    <PinRotated />
                  </Slot>
                  <Gap $w={8} />
                  <X size={14} strokeWidth={1.700} color="#5a3d14" />
                </DocTab>
                <DocTools>
                  <Caret $color="#e6ebf7" />
                  <Settings size={13} strokeWidth={2.600} />
                </DocTools>
              </DocStrip>
              <AccentLine />
              <Designer>
                <Canvas>
                  <FormWindow>
                    <FormTitleBar>
                      <FormIcon />
                      Form1
                      <FormButtons>
                        <FormBtn $w={32}>
                          <MinGlyph />
                        </FormBtn>
                        <FormBtn $w={31}>
                          <MaxGlyph />
                        </FormBtn>
                        <FormBtn $w={32} $close>
                          <X size={13} strokeWidth={3.500} color="#f6f0ee" />
                        </FormBtn>
                      </FormButtons>
                    </FormTitleBar>
                    <Client>
                      <ButtonRow>
                        <FormButton>開始</FormButton>
                        <FormButton>停止</FormButton>
                        <FormButton>終了</FormButton>
                      </ButtonRow>
                      <Selection>
                        <InnerDash />
                        {handles.map((h) => (
                          <Handle key={`${h.x}${h.y}`} $x={h.x} $y={h.y} />
                        ))}
                        <SmartTag />
                      </Selection>
                    </Client>
                  </FormWindow>
                </Canvas>
                <VBar>
                  <VThumb />
                </VBar>
                <HBar>
                  <HLine />
                </HBar>
                <div />
              </Designer>
            </DocColumn>

            <Panel $w={127}>
              <PanelHeader>
                <HeaderTitle>
                  <T>ツールボックス</T>
                </HeaderTitle>
                <PanelButtons />
              </PanelHeader>
              <SearchRow $pt={1} $h={23}>
                <SearchBox $h={20}>
                  <SearchText>
                    <T>ツールボックスの検索</T>
                  </SearchText>
                  <SearchIcon>
                    <Lens />
                  </SearchIcon>
                  <SearchDrop>
                    <Caret />
                  </SearchDrop>
                </SearchBox>
              </SearchRow>
              <Category>
                <TriOpen />
                全般
              </Category>
              <ToolBoxFill />
              <BottomTabs>
                <BottomTab $w={69} $active>
                  <T>ツールボッ</T>...
                </BottomTab>
                <BottomTab $w={55}>
                  <T>プロパティ</T>
                </BottomTab>
              </BottomTabs>
            </Panel>
          </TopRow>

          <WatchPanel>
            <PanelHeader $h={21}>
              <HeaderTitle>
                <T>ウォッチ 1</T>
              </HeaderTitle>
              <PanelButtons />
            </PanelHeader>
            <WatchTools>
              <WatchSearch>
                <SearchText>検索 (Ctrl+E)</SearchText>
                <SearchIcon>
                  <Lens />
                </SearchIcon>
                <SearchDrop>
                  <Caret />
                </SearchDrop>
              </WatchSearch>
              <WatchArrows>
                <WatchArrow />
                <WatchArrow right />
              </WatchArrows>
              <WatchLabel>
                <T>検索の詳細度:</T>
              </WatchLabel>
              <WatchCombo>
                <Caret $color="#98a1b8" />
              </WatchCombo>
            </WatchTools>
            <WatchTabs>
              {watchTabs.map((t) => (
                <WatchTab key={t}>
                  <T>{t}</T>
                </WatchTab>
              ))}
              <WatchTab $active>
                <T>ウォッチ 1</T>
              </WatchTab>
            </WatchTabs>
          </WatchPanel>
        </Main>

        <StatusBar>
          <StatusLeft>
            <Bubble />
            準備完了
          </StatusLeft>
          <StatusRight>
            <StatusItem>
              <ArrowUp size={18} strokeWidth={1.200} />
              <span>
                <T>ソース管理に追加</T>
              </span>
              <Caret $up $ml={3} $color="#f5e9e7" />
            </StatusItem>
            <Gap $w={23} />
            <StatusItem>
              <RepoIcon />
              <span>
                <T>リポジトリの選択</T>
              </span>
              <Caret $up $ml={6} $color="#f5e9e7" />
            </StatusItem>
            <Gap $w={22} />
            <Bell size={16} strokeWidth={1.200} />
            <Gap $w={29} />
          </StatusRight>
          <SizeGrip />
        </StatusBar>
      </Window>
    </>
  );
}

export default App;
